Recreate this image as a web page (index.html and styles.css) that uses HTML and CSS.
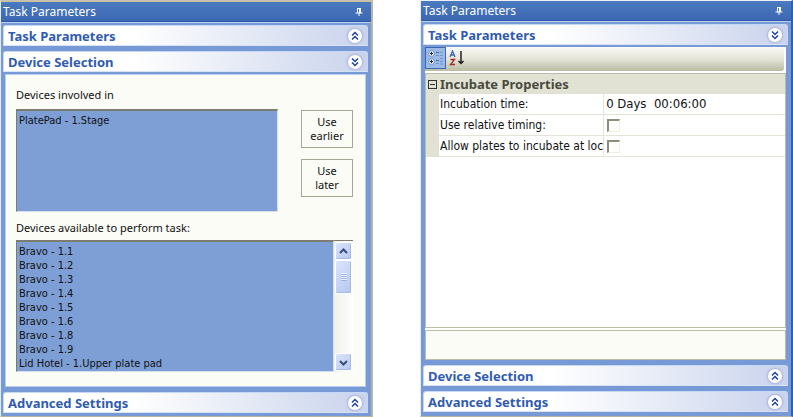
FILE: index.html
```
<!DOCTYPE html>
<html lang="en">

<head>
    <meta charset="UTF-8">
    <meta name="viewport" content="width=device-width, initial-scale=1.0">
    <title>Task Parameters</title>
    <link rel="stylesheet" href="styles.css">
</head>

<body>
    <!-- shared icons -->
    <svg class="sprite" aria-hidden="true">
        <symbol id="pin" viewBox="0 0 8 8">
            <path d="M2 0.5H6M2.5 0V5M5.5 0V5M4.5 1V5M0.5 5H7.5M4 5V8" fill="none" stroke="#fff" />
        </symbol>
        <symbol id="up" viewBox="0 0 14 14">
            <path d="M4 6.5L7 3.5L10 6.5M4 10.5L7 7.5L10 10.5" fill="none" stroke="#1d419f" stroke-width="1.5" />
        </symbol>
        <symbol id="down" viewBox="0 0 14 14">
            <path d="M4 3.5L7 6.5L10 3.5M4 7.5L7 10.5L10 7.5" fill="none" stroke="#1d419f" stroke-width="1.5" />
        </symbol>
    </svg>

    <section class="panel panel-framed">
        <div class="titlebar">
            <span>Task Parameters</span>
            <button class="pin" aria-label="Pin"><svg><use href="#pin" /></svg></button>
        </div>
        <div class="panel-body">
            <button class="group">Task Parameters <svg class="round"><use href="#up" /></svg></button>
            <button class="group">Device Selection <svg class="round"><use href="#down" /></svg></button>
            <div class="devices">
                <label for="involved">Devices involved in</label>
                <div class="involved-row">
                    <select id="involved" class="list" multiple>
                        <option>PlatePad - 1.Stage</option>
                    </select>
                    <div class="buttons">
                        <button class="use">Use earlier</button>
                        <button class="use">Use later</button>
                    </div>
                </div>
                <label for="available">Devices available to perform task:</label>
                <div class="available">
                    <select id="available" class="list" multiple>
                        <option>Bravo - 1.1</option>
                        <option>Bravo - 1.2</option>
                        <option>Bravo - 1.3</option>
                        <option>Bravo - 1.4</option>
                        <option>Bravo - 1.5</option>
                        <option>Bravo - 1.6</option>
                        <option>Bravo - 1.8</option>
                        <option>Bravo - 1.9</option>
                        <option>Lid Hotel - 1.Upper plate pad</option>
                    </select>
                    <div class="scrollbar">
                        <button class="arrow" aria-label="Scroll up"><svg viewBox="0 0 9 9"><path d="M1 6L4.5 2.5L8 6" /></svg></button>
                        <div class="thumb"></div>
                        <button class="arrow arrow-end" aria-label="Scroll down"><svg viewBox="0 0 9 9"><path d="M1 3L4.5 6.5L8 3" /></svg></button>
                    </div>
                </div>
            </div>
            <button class="group">Advanced Settings <svg class="round"><use href="#up" /></svg></button>
        </div>
    </section>

    <section class="panel panel-docked">
        <div class="titlebar">
            <span>Task Parameters</span>
            <button class="pin" aria-label="Pin"><svg><use href="#pin" /></svg></button>
        </div>
        <div class="panel-body">
            <button class="group">Task Parameters <svg class="round"><use href="#down" /></svg></button>
            <div class="properties">
                <div class="toolbar">
                    <button class="tool tool-on" aria-label="Categorized">
                        <svg viewBox="0 0 16 16">
                            <rect x="1" y="1" width="5" height="5" rx="1" fill="#fff" stroke="#6f93cd" />
                            <rect x="1" y="9" width="5" height="5" rx="1" fill="#fff" stroke="#6f93cd" />
                            <path d="M2 3.5H5M3.5 2V5M2 11.5H5M3.5 10V13" stroke="#16285c" />
                            <path d="M8 2.5H11M8 10.5H11" stroke="#46689f" />
                            <path d="M8 5.5H11M8 13.5H11M12 2.5H15M12 5.5H15M12 8.5H15M12 11.5H15M12 14H15" stroke="#7197d0" />
                        </svg>
                    </button>
                    <button class="tool" aria-label="Alphabetical">
                        <svg viewBox="0 0 16 16">
                            <path d="M1 7L3.5 1L6 7M2 5H5" fill="none" stroke="#3c63b5" stroke-width="1.3" />
                            <path d="M1.5 9.5H5.5L1.5 14.5H6" fill="none" stroke="#a52a2a" stroke-width="1.3" />
                            <path d="M12 1V13M9.5 11L12 13.5L14.5 11" fill="none" stroke="#222" stroke-width="1.5" />
                        </svg>
                    </button>
                </div>
                <div class="grid">
                    <table>
                        <tr>
                            <th class="gutter"><button class="collapse" aria-label="Collapse"></button></th>
                            <th class="category name">Incubate Properties</th>
                            <th class="category"></th>
                        </tr>
                        <tr>
                            <td class="gutter"></td>
                            <td class="name">Incubation time:</td>
                            <td class="value">0 Days&nbsp; 00:06:00</td>
                        </tr>
                        <tr>
                            <td class="gutter"></td>
                            <td class="name"><label for="relative">Use relative timing:</label></td>
                            <td><input type="checkbox" id="relative"></td>
                        </tr>
                        <tr>
                            <td class="gutter"></td>
                            <td class="name"><label for="allow">Allow plates to incubate at loc</label></td>
                            <td><input type="checkbox" id="allow"></td>
                        </tr>
                    </table>
                </div>
                <div class="description"></div>
            </div>
            <button class="group">Device Selection <svg class="round"><use href="#up" /></svg></button>
            <button class="group">Advanced Settings <svg class="round"><use href="#up" /></svg></button>
        </div>
    </section>
</body>

</html>
```
FILE: styles.css
```
* {
    box-sizing: border-box;
}

body {
    margin: 0;
    min-height: 100vh;
    display: flex;
    gap: 47px;
    padding-bottom: 1px;
    background: #fff;
    font-family: "Noto Sans", "DejaVu Sans Condensed", sans-serif;
    font-size: 11px;
    color: #111;
}

button,
select,
input {
    font: inherit;
    color: inherit;
    margin: 0;
    padding: 0;
    border: none;
    background: none;
}

.sprite {
    display: none;
}

/* Panels */
.panel {
    flex: 1 1 0;
    min-width: 0;
    display: flex;
    flex-direction: column;
    border: 1px solid #b9b5a3;
    border-top-color: #eef0f4;
    border-left-color: #e6eaf2;
}

.panel-framed {
    border-top: 2px solid #c9c1a8;
    border-right-width: 2px;
}

.panel-docked {
    border-right: 2px solid #2f5fb0;
}

.titlebar {
    display: flex;
    align-items: center;
    justify-content: space-between;
    height: 20px;
    padding: 0 8px 0 2px;
    background: linear-gradient(#4b7abf, #3c68b2);
    border-bottom: 1px solid #2d5aa8;
    color: #fff;
    font-size: 12px;
}

.pin,
.pin svg {
    display: block;
    width: 8px;
    height: 8px;
}

.panel-body {
    flex: 1;
    display: flex;
    flex-direction: column;
    padding: 2px 3px 3px 2px;
    border-top: 1px solid #b9d0f2;
    background: #7799d5;
}

.panel-docked .panel-body {
    padding-bottom: 4px;
}

/* Group headers */
.group {
    display: flex;
    align-items: center;
    justify-content: space-between;
    flex: none;
    height: 21px;
    margin-top: 5px;
    padding: 0 5px 0 4px;
    border: 1px solid #c5d8f6;
    border-bottom-color: #d8e2f5;
    border-radius: 3px 3px 0 0;
    background: linear-gradient(to right, #fff 35%, #c9d3ec);
    color: #2f5bb0;
    font-size: 13px;
    font-weight: bold;
}

.group:first-child {
    margin-top: 0;
}

.round {
    width: 14px;
    height: 14px;
    border-radius: 50%;
    background: #fff;
    box-shadow: 0 0 2px 1px #a9b2dc;
}

/* Device selection */
.devices {
    flex: 1;
    margin: 2px 2px 0;
    padding: 12px 12px 14px 10px;
    border: 1px solid #b9cdf0;
    background: #fbfcf6;
}

.devices label {
    display: block;
    line-height: 16px;
}

.list {
    display: block;
    flex: 1;
    min-width: 0;
    height: 100%;
    padding: 3px 2px 0;
    border: 1px solid #d5deee;
    border-top: 2px solid #7b7d70;
    border-left: 1px solid #7b7d70;
    border-radius: 0;
    background: #7d9fd5;
    font-family: "DejaVu Sans Condensed", "DejaVu Sans", sans-serif;
    overflow: hidden;
}

.list option {
    min-height: 14px;
    padding: 0;
    line-height: 14px;
}

.involved-row {
    display: flex;
    gap: 23px;
    height: 103px;
    margin: 6px 0 8px;
}

.buttons {
    display: flex;
    flex-direction: column;
    gap: 11px;
    padding-top: 1px;
}

.use {
    width: 52px;
    height: 38px;
    padding: 0 4px;
    border: 1px solid #a5a796;
    line-height: 14px;
}

.available {
    display: flex;
    height: 132px;
    margin-top: 4px;
}

.scrollbar {
    display: flex;
    flex-direction: column;
    width: 19px;
    padding: 1px;
    border-top: 1px solid #7b7d70;
    background: linear-gradient(to right, #efefeb, #fff);
}

.arrow,
.thumb {
    height: 18px;
    border: 1px solid #fff;
    border-radius: 2px;
    background: linear-gradient(135deg, #dbe5fb, #b6c8ef);
    box-shadow: inset -1px -1px #a5b9e2;
}

.arrow svg {
    display: block;
    width: 9px;
    height: 9px;
    margin: auto;
}

.arrow path {
    fill: none;
    stroke: #344f7d;
    stroke-width: 2;
}

.arrow-end {
    margin-top: auto;
}

.thumb {
    display: grid;
    place-items: center;
    height: 34px;
}

.thumb::before {
    content: "";
    width: 6px;
    height: 8px;
    background: repeating-linear-gradient(#eef4fe 0 1px, #9db4e4 1px 2px);
}

/* Property grid */
.properties {
    flex: 1;
    display: flex;
    flex-direction: column;
    margin: 2px 2px 0;
    background: #fff;
    font-size: 12px;
}

.toolbar {
    display: flex;
    height: 24px;
    margin: 0 2px 2px 0;
    background: linear-gradient(#fafaf7, #e4e4d8 50%, #babca2);
    border-radius: 0 0 3px 0;
}

.tool {
    display: grid;
    place-items: center;
    width: 21px;
    height: 22px;
}

.tool svg {
    width: 16px;
    height: 16px;
}

.tool-on {
    border: 1px solid #3a66b4;
    background: #9db9e6;
}

.grid {
    flex: 1;
    border: 1px solid #bcbda9;
}

.grid table {
    width: 100%;
    table-layout: fixed;
    border-collapse: separate;
    border-spacing: 0;
}

.grid th,
.grid td {
    height: 21px;
    padding: 0 0 0 1px;
    border-bottom: 1px solid #e4e4d8;
    font-family: "DejaVu Sans Condensed", "DejaVu Sans", sans-serif;
    line-height: 18px;
    text-align: left;
    white-space: nowrap;
    overflow: hidden;
}

.grid .gutter {
    width: 13px;
    padding: 0;
    border: none;
    background: #e1e2d3;
}

.grid .name {
    width: 46%;
    border-right: 1px solid #e4e4d8;
}

.grid .value {
    padding-left: 2px;
    font-size: 13px;
}

.grid .category {
    height: 20px;
    border-color: #e1e2d3;
    background: #e1e2d3;
    color: #4a4a3e;
    font-family: "Noto Sans", sans-serif;
    font-size: 13px;
}

.grid th.gutter {
    height: 20px;
}

.collapse {
    display: block;
    width: 9px;
    height: 9px;
    margin-left: 2px;
    border: 1px solid #333;
    background: linear-gradient(#333, #333) center / 5px 1px no-repeat;
}

.grid input {
    display: block;
    appearance: none;
    width: 13px;
    height: 13px;
    margin-left: 2px;
    border: 1px solid #efefe2;
    border-top: 2px solid #8d8c7d;
    border-left: 2px solid #8d8c7d;
}

.description {
    height: 30px;
    margin-top: 2px;
    border: 1px solid #bcbda9;
    background: #fbfcf6;
}
```
